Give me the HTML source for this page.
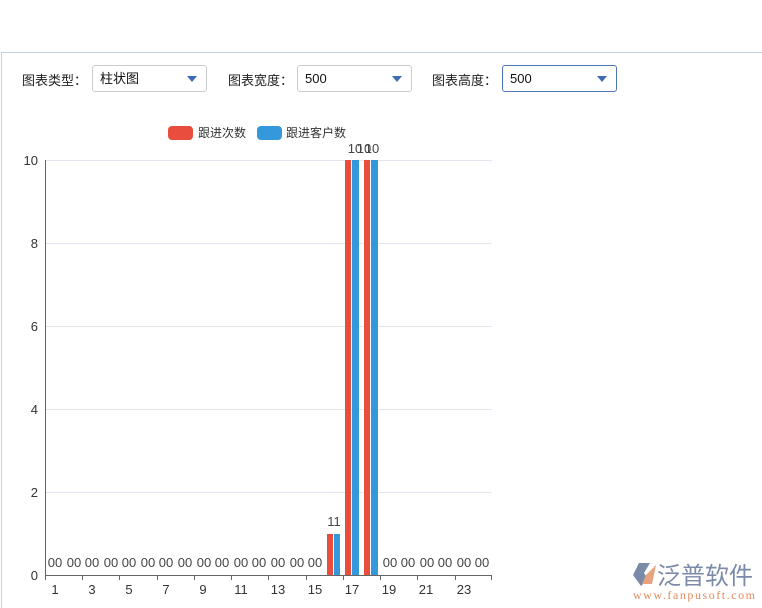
<!DOCTYPE html>
<html><head><meta charset="utf-8"><style>
html,body{margin:0;width:762px;height:608px;overflow:hidden}
body{background:#fff;font-family:"Liberation Sans","Noto Sans CJK SC",sans-serif;position:relative}
.panel{position:absolute;left:1px;top:52px;width:761px;height:556px;border-top:1px solid #c3d1e2;border-left:1px solid #c3d1e2;box-sizing:border-box}
.lbl{position:absolute;top:70px;font-size:13px;color:#222}
.sel{position:absolute;top:65px;height:27px;border:1px solid #ccc;border-radius:3px;font-size:13px;line-height:25px;padding-left:7px;box-sizing:border-box;color:#111}
.sel:after{content:"";position:absolute;right:9px;top:10px;border-left:5px solid transparent;border-right:5px solid transparent;border-top:6px solid #3d6cb3}
</style></head><body>
<div class="panel"></div>
<div class="lbl" style="left:22px">图表类型：</div>
<div class="sel" style="left:92px;width:115px">柱状图</div>
<div class="lbl" style="left:228px">图表宽度：</div>
<div class="sel" style="left:297px;width:115px">500</div>
<div class="lbl" style="left:432px">图表高度：</div>
<div class="sel" style="left:502px;width:115px;border-color:#4c76b8">500</div>
<svg width="762" height="608" style="position:absolute;left:0;top:0" font-family="Liberation Sans, Noto Sans CJK SC, sans-serif">
<rect x="168" y="126" width="25" height="14" rx="4" fill="#e84d3d"/>
<text x="198" y="137" font-size="12" fill="#333">跟进次数</text>
<rect x="257" y="126" width="25" height="14" rx="4" fill="#3498db"/>
<text x="286" y="137" font-size="12" fill="#333">跟进客户数</text>
<g stroke="#e3e6f0" stroke-width="1">
<line x1="46" y1="160.5" x2="492" y2="160.5"/><line x1="46" y1="243.5" x2="492" y2="243.5"/>
<line x1="46" y1="326.5" x2="492" y2="326.5"/><line x1="46" y1="409.5" x2="492" y2="409.5"/>
<line x1="46" y1="492.5" x2="492" y2="492.5"/>
</g>
<g font-size="13" fill="#333" text-anchor="end">
<text x="38" y="165">10</text><text x="38" y="248">8</text><text x="38" y="331">6</text><text x="38" y="414">4</text><text x="38" y="497">2</text><text x="38" y="580">0</text>
</g>
<line x1="45.5" y1="160" x2="45.5" y2="575" stroke="#666"/>
<line x1="45" y1="575.5" x2="492" y2="575.5" stroke="#666"/>
<g stroke="#666">
<line x1="45.5" y1="575" x2="45.5" y2="580"/><line x1="82.5" y1="575" x2="82.5" y2="580"/><line x1="119.5" y1="575" x2="119.5" y2="580"/><line x1="157.5" y1="575" x2="157.5" y2="580"/><line x1="194.5" y1="575" x2="194.5" y2="580"/><line x1="231.5" y1="575" x2="231.5" y2="580"/><line x1="268.5" y1="575" x2="268.5" y2="580"/><line x1="306.5" y1="575" x2="306.5" y2="580"/><line x1="343.5" y1="575" x2="343.5" y2="580"/><line x1="380.5" y1="575" x2="380.5" y2="580"/><line x1="417.5" y1="575" x2="417.5" y2="580"/><line x1="455.5" y1="575" x2="455.5" y2="580"/><line x1="491.5" y1="575" x2="491.5" y2="580"/>
</g>
<g font-size="13" fill="#333" text-anchor="middle">
<text x="55" y="594">1</text><text x="92" y="594">3</text><text x="129" y="594">5</text><text x="166" y="594">7</text><text x="203" y="594">9</text><text x="241" y="594">11</text><text x="278" y="594">13</text><text x="315" y="594">15</text><text x="352" y="594">17</text><text x="389" y="594">19</text><text x="426" y="594">21</text><text x="464" y="594">23</text>
</g>
<g font-size="13" fill="#444" text-anchor="middle">
<text x="55" y="567">00</text><text x="74" y="567">00</text><text x="92" y="567">00</text><text x="111" y="567">00</text><text x="129" y="567">00</text><text x="148" y="567">00</text><text x="166" y="567">00</text><text x="185" y="567">00</text><text x="204" y="567">00</text><text x="222" y="567">00</text><text x="241" y="567">00</text><text x="259" y="567">00</text><text x="278" y="567">00</text><text x="297" y="567">00</text><text x="315" y="567">00</text>
<text x="390" y="567">00</text><text x="408" y="567">00</text><text x="427" y="567">00</text><text x="445" y="567">00</text><text x="464" y="567">00</text><text x="482" y="567">00</text>
<text x="334" y="526">11</text><text x="355" y="153">10</text><text x="364" y="153">10</text><text x="372" y="153">10</text>
</g>
<rect x="327" y="534" width="6" height="41" fill="#e84d3d"/><rect x="334" y="534" width="6" height="41" fill="#3498db"/>
<rect x="345" y="160" width="6" height="415" fill="#e84d3d"/><rect x="352" y="160" width="7" height="415" fill="#3498db"/>
<rect x="364" y="160" width="6" height="415" fill="#e84d3d"/><rect x="371" y="160" width="7" height="415" fill="#3498db"/>
<path d="M639 563 L650 563 L644 573 L648 579 L641 586 L633 575 Z" fill="#7b8aa8"/>
<path d="M646 575 L656 565 L652 584 L642 584 Z" fill="#e8a27c"/>
<text x="657" y="584" font-size="24" fill="#7b8aa8">泛普软件</text>
<text x="633" y="599" font-size="12" fill="#e08a5e" font-family="Liberation Serif, serif" textLength="122">www.fanpusoft.com</text>
</svg>
</body></html>
